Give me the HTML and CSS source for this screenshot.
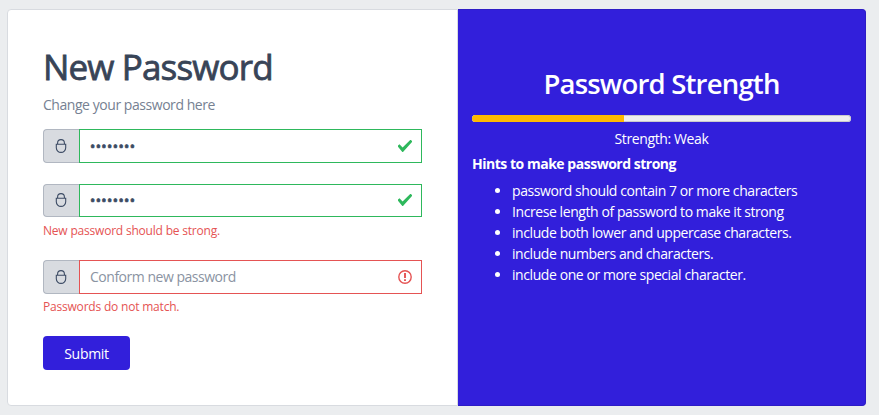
FILE: index.html
```html
<!DOCTYPE html>
<html lang="en">
<head>
<meta charset="utf-8">
<title>New Password</title>
<link rel="stylesheet" href="styles.css">
</head>
<body>
<svg class="defs" width="0" height="0" aria-hidden="true">
  <symbol id="lock" viewBox="0 0 12 14">
    <path d="M2.6 5.2V4a3.4 3.4 0 0 1 6.8 0v1.2M1.3 5.3h9.4v3.4a4.7 4.7 0 0 1-9.4 0z" fill="none" stroke="currentColor" stroke-width="1.1"/>
  </symbol>
  <symbol id="check" viewBox="0 0 14 12">
    <path d="M0 6.8V5.5L1.5 4.2 4.6 7.4 12.2 0h.7L14 1.1v1L5 12H4.3z" fill="#2eb85c"/>
  </symbol>
  <symbol id="alert" viewBox="0 0 14 14">
    <circle cx="7" cy="7" r="6.2" fill="none" stroke="#e55353" stroke-width="1.4"/>
    <path d="M7 3v5M7 9.2v1.7" stroke="#e55353" stroke-width="1.9"/>
  </symbol>
</svg>
<main class="group">
  <form class="card">
    <h1>New Password</h1>
    <p class="lead">Change your password here</p>
    <div class="field valid">
      <span class="prefix"><svg><use href="#lock"/></svg></span>
      <div class="control"><span class="dots">••••••••</span><svg class="check"><use href="#check"/></svg></div>
    </div>
    <div class="field valid second">
      <span class="prefix"><svg><use href="#lock"/></svg></span>
      <div class="control"><span class="dots">••••••••</span><svg class="check"><use href="#check"/></svg></div>
    </div>
    <p class="feedback strong">New password should be strong.</p>
    <div class="field invalid">
      <span class="prefix"><svg><use href="#lock"/></svg></span>
      <div class="control"><span class="placeholder">Conform new password</span><svg class="alert"><use href="#alert"/></svg></div>
    </div>
    <p class="feedback match">Passwords do not match.</p>
    <button type="button">Submit</button>
  </form>
  <section class="panel">
    <h2>Password Strength</h2>
    <div class="meter"><div class="bar" style="width:40%"></div></div>
    <p class="level">Strength: Weak</p>
    <p class="hints">Hints to make password strong</p>
    <ul>
      <li>password should contain 7 or more characters</li>
      <li>Increse length of password to make it strong</li>
      <li>include both lower and uppercase characters.</li>
      <li>include numbers and characters.</li>
      <li>include one or more special character.</li>
    </ul>
  </section>
</main>
</body>
</html>
```
FILE: styles.css
```css
* { box-sizing: border-box; }
body {
  margin: 0;
  padding: 9px 13px 9px 7px;
  height: 415px;
  overflow: hidden;
  background: #ebedef;
  color: #3c4b64;
  font: 14px/21px "Open Sans", "Noto Sans", sans-serif;
}
h1, h2, p, ul { margin: 0; }
h1, h2, p, li, button, .placeholder { white-space: nowrap; }
.defs { position: absolute; }
.group { display: flex; height: 397px; }
.card {
  width: 451px;
  padding: 36px 35px 0;
  background: #fff;
  border: 1px solid #d8dbe0;
  border-radius: 4px 0 0 4px;
}
h1 {
  font-size: 35px;
  line-height: 42px;
  font-weight: 400;
  letter-spacing: -.85px;
  color: #384457;
  -webkit-text-stroke: .8px #384457;
}
.lead { margin-top: 6px; color: #768192; letter-spacing: -.45px; }
.field { display: flex; height: 34px; margin-top: 14px; }
.second { height: 33px; margin-top: 21px; }
.prefix {
  width: 36px;
  display: flex;
  align-items: center;
  justify-content: center;
  padding-right: 1px;
  background: #d8dbe0;
  border: 1px solid #b1b7c1;
  border-right: 0;
  border-radius: 4px 0 0 4px;
}
.prefix svg { width: 12px; height: 14px; }
.second .prefix, .second .control { padding-bottom: 1px; }
.control {
  flex: 1;
  display: flex;
  align-items: center;
  justify-content: space-between;
  padding: 0 9px 0 10px;
  border: 1px solid #2eb85c;
}
.invalid .control { border-color: #e55353; }
.dots { letter-spacing: .42px; -webkit-text-stroke: .7px #3c4b64; }
.check { width: 14px; height: 12px; }
.alert { width: 14px; height: 14px; }
.placeholder { color: #8a93a2; letter-spacing: -.48px; padding-bottom: 1px; }
.feedback { color: #e55353; font-size: 12px; line-height: 18px; letter-spacing: -.2px; }
.strong { margin-top: 5px; }
.strong + .field { margin-top: 20px; }
.match { margin-top: 4px; }
button {
  display: block;
  width: 87px;
  height: 34px;
  margin-top: 20px;
  padding: 0;
  border: 0;
  border-radius: 4px;
  background: #321fdb;
  color: #fff;
  font: inherit;
  letter-spacing: -.3px;
}
.panel {
  flex: 1;
  padding: 57px 14px 0;
  background: #321fdb;
  border: 1px solid #2d1cc5;
  border-left: 0;
  border-radius: 0 4px 4px 0;
  color: #fff;
}
h2 { font-size: 27.5px; line-height: 34px; font-weight: 600; text-align: center; letter-spacing: -.8px; }
.meter {
  height: 7px;
  margin-top: 14px;
  overflow: hidden;
  border-radius: 4px;
  background: #efefef;
  box-shadow: inset 0 0 0 1px #cbcbcb;
}
.bar { height: 100%; background: #ffb900; }
.level { margin-top: 6px; text-align: center; letter-spacing: -.38px; }
.hints { margin-top: 4px; font-weight: 700; letter-spacing: -.48px; }
ul { margin-top: 6px; padding-left: 40px; letter-spacing: -.42px; }
```
